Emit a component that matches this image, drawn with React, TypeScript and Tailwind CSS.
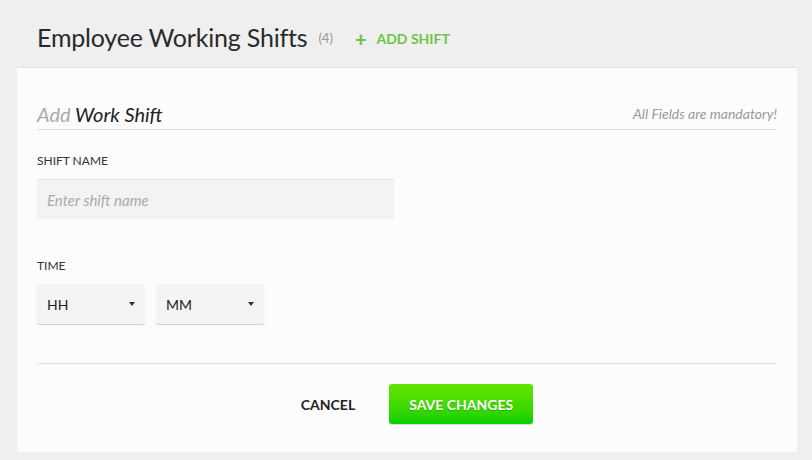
import React from 'react';

const font = { fontFamily: 'Lato, "Noto Sans", sans-serif' };

function Caret() {
  return <span className="inline-block w-0 h-0 border-l-[3px] border-r-[3px] border-t-[4px] border-l-transparent border-r-transparent border-t-[#333]" />;
}

function SelectBox({ label }: { label: string }) {
  return (
    <div className="w-[108px] h-[40px] bg-[#f4f4f4] rounded-[2px] shadow-[0_1px_1px_rgba(0,0,0,0.18)] flex items-center justify-between pl-[10px] pr-[10px]">
      <span className="text-[14px] text-[#222]">{label}</span>
      <Caret />
    </div>
  );
}

export default function App() {
  return (
    <div className="w-[812px] h-[460px] bg-[#efefef] overflow-hidden" style={font}>
      {/* Page header */}
      <div className="h-[67px] flex items-center pl-[37px] pt-[8px]">
        <h1 className="text-[25px] text-[#2a2a2a] tracking-[-0.2px]">Employee Working Shifts</h1>
        <span className="ml-[11px] text-[13px] text-[#999] mt-[2px]">(4)</span>
        <button className="ml-[22px] flex items-center gap-[10px] text-[14px] font-bold text-[#6cc644] mt-[2px]">
          <span className="text-[20px] leading-none font-black">+</span>
          ADD SHIFT
        </button>
      </div>

      {/* Form card */}
      <div className="ml-[17px] w-[780px] h-[385px] bg-[#fcfcfc] border-t border-[#e2e2e2] px-[20px]">
        <div className="flex items-end justify-between pt-[31px] border-b border-[#e0e0e0]">
          <h2 className="text-[20px] italic">
            <span className="text-[#aaa]">Add</span> <span className="text-[#222]">Work Shift</span>
          </h2>
          <span className="text-[14px] italic text-[#999] mb-[5px]">All Fields are mandatory!</span>
        </div>

        <div className="mt-[22px] text-[12px] text-[#333]">SHIFT NAME</div>
        <input
          className="mt-[9px] w-[357px] h-[40px] bg-[#f3f3f3] border-t border-[#e6e6e6] px-[10px] text-[15px] italic placeholder:text-[#aaa] outline-none"
          placeholder="Enter shift name"
        />

        <div className="mt-[38px] text-[12px] text-[#333]">TIME</div>
        <div className="mt-[9px] flex gap-[11px]">
          <SelectBox label="HH" />
          <SelectBox label="MM" />
        </div>

        <div className="mt-[39px] border-t border-[#e0e0e0] flex items-center justify-center gap-[34px] pt-[20px] pl-[20px]">
          <button className="text-[14px] font-bold text-[#222]">CANCEL</button>
          <button className="w-[144px] h-[40px] rounded-[3px] text-[14px] font-bold text-white bg-gradient-to-b from-[#62e500] to-[#00d000] shadow-[0_1px_1px_rgba(0,0,0,0.15)] [text-shadow:0_1px_1px_rgba(0,0,0,0.2)]">
            SAVE CHANGES
          </button>
        </div>
      </div>
    </div>
  );
}
